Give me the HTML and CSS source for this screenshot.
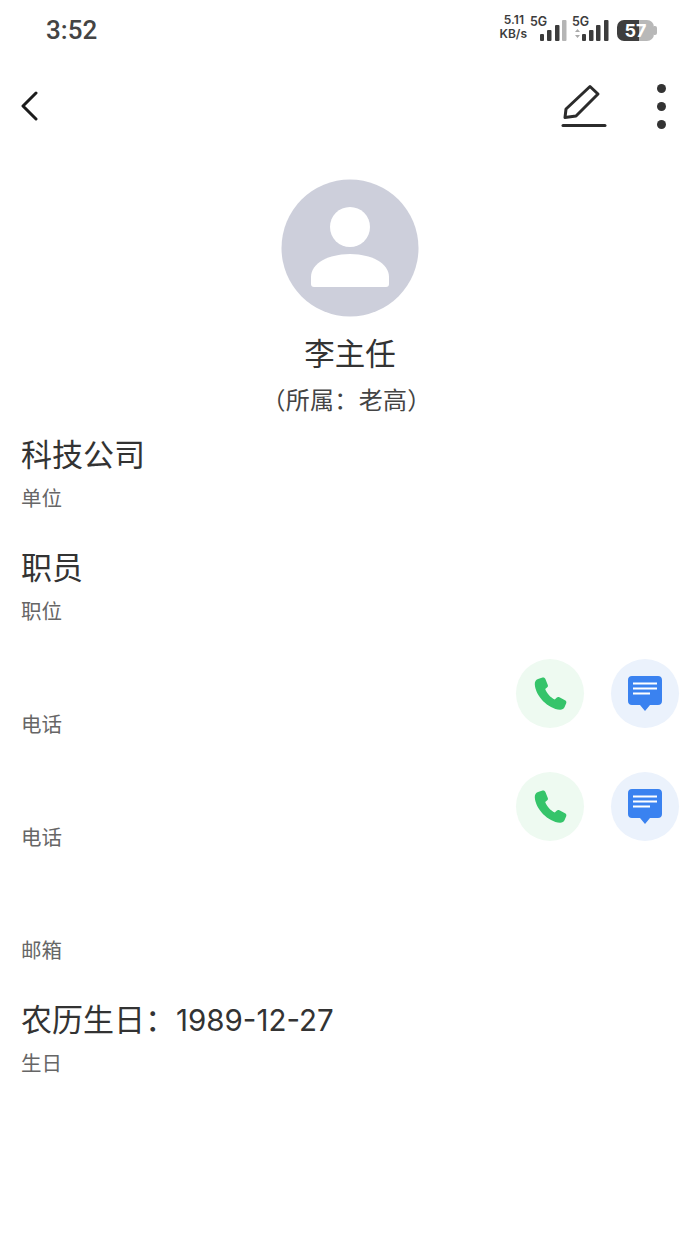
FILE: index.html
```html
<!DOCTYPE html>
<html lang="zh">
<head>
<meta charset="utf-8">
<title>李主任</title>
<link rel="stylesheet" href="styles.css">
</head>
<body>
<div class="status">
  <span class="time">3:52</span>
  <div class="indicators">
    <div class="speed"><span>5.11</span><span>KB/s</span></div>
    <div class="net first"><span class="g">5G</span>
      <svg width="27" height="21" viewBox="0 0 27 21"><rect x="0" y="14" width="4" height="7" rx="1" fill="#3c3c3c"/><rect x="7" y="10" width="4.500" height="11" rx="1" fill="#3c3c3c"/><rect x="15" y="5" width="4.500" height="16" rx="1" fill="#3c3c3c"/><rect x="22" y="0" width="4.500" height="21" rx="1" fill="#b5b5b5"/></svg>
    </div>
    <div class="net second"><span class="g">5G</span>
      <svg width="35" height="21" viewBox="0 0 35 21"><path d="M1 12l2.500-3 2.500 3zM1 15l2.500 3 2.500-3z" fill="#aaa"/><rect x="8" y="14" width="4" height="7" rx="1" fill="#3c3c3c"/><rect x="15" y="10" width="4.500" height="11" rx="1" fill="#3c3c3c"/><rect x="22" y="5" width="4.500" height="16" rx="1" fill="#3c3c3c"/><rect x="30" y="0" width="4.500" height="21" rx="1" fill="#3c3c3c"/></svg>
    </div>
    <div class="battery"><span class="level">57</span><i class="nub"></i></div>
  </div>
</div>
<div class="toolbar">
  <svg class="back" width="18" height="30" viewBox="0 0 18 30"><path d="M16 2 L3 15 L16 28" fill="none" stroke="#1c1c1c" stroke-width="3" stroke-linecap="round" stroke-linejoin="round"/></svg>
  <div class="actions">
    <svg width="46" height="44" viewBox="0 0 46 44"><path d="M29 2.500 L37 10 L15 32 L4 33.500 L5 25 Z" fill="none" stroke="#2b2b2b" stroke-width="3" stroke-linejoin="round"/><path d="M2 41.500 H44" stroke="#2b2b2b" stroke-width="3" stroke-linecap="round"/></svg>
    <div class="more"><i></i><i></i><i></i></div>
  </div>
</div>
<div class="profile">
  <svg width="138" height="138" viewBox="0 0 138 138"><circle cx="69" cy="69" r="68.500" fill="#cdcfdb"/><circle cx="69" cy="48" r="20" fill="#fff"/><path d="M30 105 V98 C30 84 48 75 69 75 C90 75 108 84 108 98 V105 Q108 108 105 108 H33 Q30 108 30 105 Z" fill="#fff"/></svg>
  <div class="name">李主任</div>
  <div class="owner">（所属：老高）</div>
</div>
<div class="fields">
  <div class="field"><div class="value">科技公司</div><div class="label">单位</div></div>
  <div class="field"><div class="value">职员</div><div class="label">职位</div></div>
  <div class="field"><div class="value"></div><div class="label">电话</div>
    <div class="contact">
      <div class="round green"><svg width="36" height="36" viewBox="0 0 36 36"><path d="M6 3 L10.500 1.500 C11.800 1.200 13 1.800 13.400 3 L15.800 9 C16.200 10 15.800 11 15 11.600 L13.200 13 C14.500 17 18.500 21.500 22.800 23.600 L24.600 21.700 C25.400 21 26.400 20.800 27.400 21.300 L33 24.200 C34.200 24.900 34.700 26 34.200 27.200 L32.600 31 C31.800 32.800 30 33.800 28 33.700 C16 33 3.500 20 2.800 8.500 C2.600 6 3.800 3.800 6 3 Z" fill="#35c46a"/></svg></div>
      <div class="round blue"><svg width="36" height="36" viewBox="0 0 36 36"><path d="M5 0 H31 C33.500 0 35 1.500 35 4 V25 C35 27.500 33.500 29 31 29 H23 L18 35 L13 29 H5 C2.500 29 1 27.500 1 25 V4 C1 1.500 2.500 0 5 0 Z" fill="#3a82f0"/><path d="M6 7.500 H30 M6 12.500 H30 M6 17.500 H23" stroke="#fff" stroke-width="2"/></svg></div>
    </div>
  </div>
  <div class="field"><div class="value"></div><div class="label">电话</div>
    <div class="contact">
      <div class="round green"><svg width="36" height="36" viewBox="0 0 36 36"><path d="M6 3 L10.500 1.500 C11.800 1.200 13 1.800 13.400 3 L15.800 9 C16.200 10 15.800 11 15 11.600 L13.200 13 C14.500 17 18.500 21.500 22.800 23.600 L24.600 21.700 C25.400 21 26.400 20.800 27.400 21.300 L33 24.200 C34.200 24.900 34.700 26 34.200 27.200 L32.600 31 C31.800 32.800 30 33.800 28 33.700 C16 33 3.500 20 2.800 8.500 C2.600 6 3.800 3.800 6 3 Z" fill="#35c46a"/></svg></div>
      <div class="round blue"><svg width="36" height="36" viewBox="0 0 36 36"><path d="M5 0 H31 C33.500 0 35 1.500 35 4 V25 C35 27.500 33.500 29 31 29 H23 L18 35 L13 29 H5 C2.500 29 1 27.500 1 25 V4 C1 1.500 2.500 0 5 0 Z" fill="#3a82f0"/><path d="M6 7.500 H30 M6 12.500 H30 M6 17.500 H23" stroke="#fff" stroke-width="2"/></svg></div>
    </div>
  </div>
  <div class="field"><div class="value"></div><div class="label">邮箱</div></div>
  <div class="field"><div class="value">农历生日：<span class="digits">1989-12-27</span></div><div class="label">生日</div></div>
</div>
</body>
</html>
```
FILE: styles.css
```css
* { box-sizing: border-box; }
html, body { margin: 0; padding: 0; }
body {
  width: 700px;
  height: 1244px;
  background: #fff;
  overflow: hidden;
  font-family: "Noto Sans CJK SC", "Roboto", sans-serif;
  color: #333;
}
.status {
  height: 60px;
  display: flex;
  align-items: center;
  justify-content: space-between;
  padding: 0 46px 0 46px;
}
.time {
  font-family: "Roboto", sans-serif;
  font-size: 26px;
  font-weight: 500;
  color: #444;
}
.indicators { display: flex; align-items: flex-end; height: 26px; padding-bottom: 2px; }
.speed {
  display: flex;
  flex-direction: column;
  align-items: flex-end;
  width: 28px;
  font-family: "Inter", sans-serif;
  font-size: 12px;
  font-weight: 600;
  line-height: 14px;
  color: #3c3c3c;
}
.speed span:first-child { margin-right: 3px; }
.net { display: flex; align-items: flex-end; position: relative; }
.first { margin-left: 13px; margin-right: 7px; }
.second { margin-right: 8px; }
.net .g {
  position: absolute;
  top: -5px;
  font-family: "Inter", sans-serif;
  font-size: 12.500px;
  font-weight: 600;
  line-height: 14px;
  color: #3c3c3c;
}
.first .g { left: -10px; }
.second .g { left: -2px; }
.battery {
  width: 37px;
  height: 21px;
  border-radius: 7px;
  background: linear-gradient(90deg, #3e3e3e 0 60%, #b8b8b8 60% 100%);
  position: relative;
  display: flex;
  align-items: center;
  justify-content: center;
}
.level {
  font-family: "Inter", sans-serif;
  font-size: 18px;
  font-weight: 700;
  color: #fff;
  line-height: 21px;
}
.nub {
  position: absolute;
  right: -3px;
  top: 6px;
  width: 3px;
  height: 9px;
  border-radius: 0 2px 2px 0;
  background: #b8b8b8;
}
.toolbar {
  height: 90px;
  display: flex;
  align-items: center;
  justify-content: space-between;
  padding: 0 34px 0 20px;
}
.back { margin-top: 2px; }
.actions { display: flex; align-items: center; gap: 50px; margin-top: 2px; }
.more { display: flex; flex-direction: column; gap: 9px; }
.more i { display: block; width: 9px; height: 9px; border-radius: 50%; background: #333; }
.profile {
  display: flex;
  flex-direction: column;
  align-items: center;
  padding-top: 29px;
}
.name { font-size: 30.500px; line-height: 44px; margin-top: 13px; color: #333; }
.owner { font-size: 24px; line-height: 36px; margin-top: 7px; margin-left: -7px; letter-spacing: .3px; color: #444; }
.fields { padding: 14px 21px 0 21px; }
.field { height: 113px; position: relative; }
.value { height: 44px; font-size: 31px; line-height: 44px; color: #333; }
.digits { font-family: "Inter", "Roboto", sans-serif; font-size: 29.500px; }
.label { margin-top: 7px; font-size: 20.500px; line-height: 30px; color: #666; }
.contact {
  position: absolute;
  right: 0;
  top: 2px;
  display: flex;
  gap: 27px;
}
.round {
  width: 68px;
  height: 69px;
  border-radius: 50%;
  display: flex;
  align-items: center;
  justify-content: center;
}
.green { background: #eefaf1; }
.blue { background: #ebf2fc; }
```
